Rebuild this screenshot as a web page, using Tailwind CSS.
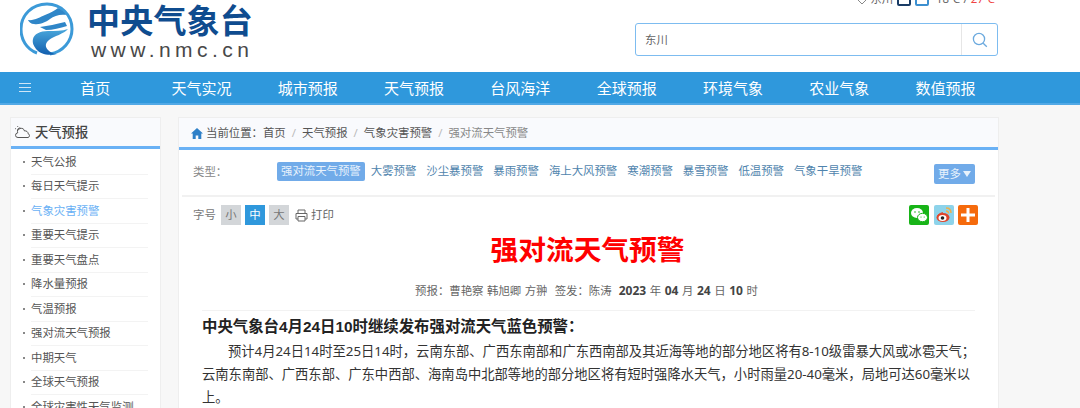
<!DOCTYPE html>
<html lang="zh">
<head>
<meta charset="UTF-8">
<title>强对流天气预警</title>
<script src="https://cdn.jsdelivr.net/npm/@tailwindcss/browser@4"></script>
</head>
<body class="bg-[#f7f7f7] font-['Noto_Sans','Noto_Sans_CJK_SC',sans-serif] text-[#555]">
<div class="w-[1080px] h-[408px] overflow-hidden">

  <!-- header -->
  <header class="h-[72px] bg-white flex justify-between overflow-hidden">
    <div class="flex pl-[20px] pt-[2px]">
      <svg width="54" height="54" viewBox="0 0 54 54">
        <defs>
          <linearGradient id="logoGrad" x1="0" y1="0" x2="0" y2="1">
            <stop offset="0" stop-color="#4aa8dc"/>
            <stop offset="1" stop-color="#125fae"/>
          </linearGradient>
        </defs>
        <path d="M17 51C6 47 1 37 1 27 1 13 12 2 27 2c14 0 25 11 25 25 0 12-9 23-22 25" fill="none" stroke="#3c9ad8" stroke-width="3"/>
        <path d="M8 18C14 19 20 15 25 13 31 11 35 8 38 6 42 8 45 10 46 13 40 12 34 14 30 17 26 20 20 23 14 22 11 22 9 20 8 18z" fill="#2f86c8"/>
        <path d="M20 25C28 24 36 22 45 20L47 24C40 26 33 28 26 28z" fill="#2f86c8"/>
        <path d="M13 37C14 32 20 29 28 29 35 29 42 29 48 27 44 32 34 34 29 38 25 41 25 45 28 48 30 50 33 52 37 52 28 54 20 52 16 47 14 44 12 41 13 37z" fill="url(#logoGrad)"/>
      </svg>
      <div class="ml-[13px] flex flex-col">
        <div class="text-[33px] leading-[38px] font-bold text-[#0f4c8f] tracking-[0.2px]">中央气象台</div>
        <div class="ml-[4px] text-[21px] leading-[20px] text-[#484848] tracking-[4.45px] font-['Liberation_Sans',sans-serif]">www.nmc.cn</div>
      </div>
    </div>
    <div class="w-[445px] pr-[82px] flex flex-col items-end">
      <div class="flex items-center h-[16px] -mt-[9px] text-[11.4px] text-[#666] pr-[3px]">
        <svg width="12" height="12" viewBox="0 0 12 12" class="mr-[2px]"><path d="M6 11 1 6a3 3 0 0 1 5-3 3 3 0 0 1 5 3z" fill="none" stroke="#888"/></svg>
        <span>东川</span>
        <span class="ml-[4px] w-[14px] h-[14px] border-2 border-[#1a3c66] rounded-[2px]"></span>
        <span class="ml-[4px] w-[14px] h-[14px] border-2 border-[#3c8fd0] rounded-[2px]"></span>
        <span class="ml-[7px]">18℃ / <span class="text-[#ef4444]">27℃</span></span>
      </div>
      <div class="mt-[16px] w-[363px] h-[33px] flex bg-white border-[1.5px] border-[#7dbcf0] rounded-[3px]">
        <div class="flex-1 pl-[9px] text-[11.4px] leading-[31px] text-[#666]">东川</div>
        <div class="w-[36px] border-l border-[#e6e6e6] flex items-center justify-center">
          <svg width="16" height="16" viewBox="0 0 16 16" fill="none" stroke="#6ba9de" stroke-width="1.3"><circle cx="7" cy="7" r="5.6"/><path d="m11.2 11.2 3.6 3.6"/></svg>
        </div>
      </div>
    </div>
  </header>

  <!-- nav -->
  <nav class="h-[33px] bg-[#2f98dc] border-b-2 border-[#52a9e6] flex items-center text-white text-[15px] pl-[18px]">
    <svg width="14" height="11" viewBox="0 0 14 11" stroke="#cfe6f7" stroke-width="1"><path d="M1 1.5h12M1 5.5h12M1 9.500h12"/></svg>
    <div class="ml-[10px] pt-[1px] grid grid-cols-[repeat(9,106.3px)] text-center leading-[31px]">
      <a>首页</a><a>天气实况</a><a>城市预报</a><a>天气预报</a><a>台风海洋</a><a>全球预报</a><a>环境气象</a><a>农业气象</a><a>数值预报</a>
    </div>
  </nav>

  <div class="flex pl-[10px] pt-[12px] gap-[17px] items-start">

    <!-- sidebar -->
    <aside class="w-[151px] shrink-0 bg-white border border-[#eeeeee] text-[11.4px]">
      <div class="h-[31px] bg-[#f9fafd] border-b-[3px] border-[#6ab1f5] flex items-center pl-[4px] pt-[2px] text-[13.300px] font-medium text-[#444]">
        <svg width="16" height="14" viewBox="0 0 16 14" fill="none" stroke="#555" class="mr-[4px]"><path d="M4 11.500H3a2.300 2.300 0 0 1-.3-4.600A3.500 3.500 0 0 1 9.500 5a2.800 2.800 0 0 1 3.600 2.700 2 2 0 0 1 0 3.800z"/><path d="M2.500 5a2.500 2.500 0 0 1 3-3M3 1 2.500.2M1 3 .2 2.500"/></svg>
        天气预报
      </div>
      <ul class="pl-[20px] pr-[12px] pt-[1px] text-[#555]">
        <li class="h-[24.500px] leading-[24px] border-b border-[#f3f3f3] flex items-center"><i class="w-[2px] h-[2px] bg-[#888] -ml-[8px] mr-[6px]"></i>天气公报</li>
        <li class="h-[24.500px] leading-[24px] border-b border-[#f3f3f3] flex items-center"><i class="w-[2px] h-[2px] bg-[#888] -ml-[8px] mr-[6px]"></i>每日天气提示</li>
        <li class="h-[24.500px] leading-[24px] border-b border-[#f3f3f3] flex items-center text-[#6ab1f5]"><i class="w-[2px] h-[2px] bg-[#888] -ml-[8px] mr-[6px]"></i>气象灾害预警</li>
        <li class="h-[24.500px] leading-[24px] border-b border-[#f3f3f3] flex items-center"><i class="w-[2px] h-[2px] bg-[#888] -ml-[8px] mr-[6px]"></i>重要天气提示</li>
        <li class="h-[24.500px] leading-[24px] border-b border-[#f3f3f3] flex items-center"><i class="w-[2px] h-[2px] bg-[#888] -ml-[8px] mr-[6px]"></i>重要天气盘点</li>
        <li class="h-[24.500px] leading-[24px] border-b border-[#f3f3f3] flex items-center"><i class="w-[2px] h-[2px] bg-[#888] -ml-[8px] mr-[6px]"></i>降水量预报</li>
        <li class="h-[24.500px] leading-[24px] border-b border-[#f3f3f3] flex items-center"><i class="w-[2px] h-[2px] bg-[#888] -ml-[8px] mr-[6px]"></i>气温预报</li>
        <li class="h-[24.500px] leading-[24px] border-b border-[#f3f3f3] flex items-center"><i class="w-[2px] h-[2px] bg-[#888] -ml-[8px] mr-[6px]"></i>强对流天气预报</li>
        <li class="h-[24.500px] leading-[24px] border-b border-[#f3f3f3] flex items-center"><i class="w-[2px] h-[2px] bg-[#888] -ml-[8px] mr-[6px]"></i>中期天气</li>
        <li class="h-[24.500px] leading-[24px] border-b border-[#f3f3f3] flex items-center"><i class="w-[2px] h-[2px] bg-[#888] -ml-[8px] mr-[6px]"></i>全球天气预报</li>
        <li class="h-[24.500px] leading-[24px] flex items-center"><i class="w-[2px] h-[2px] bg-[#888] -ml-[8px] mr-[6px]"></i>全球灾害性天气监测</li>
      </ul>
    </aside>

    <!-- main -->
    <main class="w-[821px] bg-white border border-[#eeeeee] text-[11.4px]">
      <div class="h-[32px] bg-[#f9fafd] border-b-[3px] border-[#6ab1f5] flex items-center pl-[12px] pt-[1px] text-[#555]">
        <svg width="12" height="11" viewBox="0 0 12 11" fill="#2f80c8" class="mr-[3px]"><path d="M6 0 0 5.500h1.700V11h3V7.500h2.600V11h3V5.500H12z"/></svg>
        <span>当前位置：</span><span>首页</span>
        <span class="mx-[6px] text-[#bbb]">/</span><span>天气预报</span>
        <span class="mx-[6px] text-[#bbb]">/</span><span>气象灾害预警</span>
        <span class="mx-[6px] text-[#bbb]">/</span><span class="text-[#888]">强对流天气预警</span>
      </div>

      <div class="mx-[3px] h-[47px] border-b-2 border-[#f1f1f1] flex items-center pl-[11px] pr-[20px] pb-[2px]">
        <span class="w-[84px] text-[#888]">类型：</span>
        <div class="flex-1 flex gap-[2px] text-[#4f84ad]">
          <span class="px-[4px] h-[19px] leading-[18px] rounded-[2px] bg-[#71abe9] text-[#e8f2fc]">强对流天气预警</span>
          <span class="px-[4px] leading-[18px]">大雾预警</span>
          <span class="px-[4px] leading-[18px]">沙尘暴预警</span>
          <span class="px-[4px] leading-[18px]">暴雨预警</span>
          <span class="px-[4px] leading-[18px]">海上大风预警</span>
          <span class="px-[4px] leading-[18px]">寒潮预警</span>
          <span class="px-[4px] leading-[18px]">暴雪预警</span>
          <span class="px-[4px] leading-[18px]">低温预警</span>
          <span class="px-[4px] leading-[18px]">气象干旱预警</span>
        </div>
        <span class="mt-[4px] w-[41px] h-[20px] rounded-[2px] bg-[#71abe9] text-[#e8f2fc] flex items-center justify-center gap-[2px]">更多<svg width="8" height="6" viewBox="0 0 8 6" fill="#e8f2fc"><path d="M0 0h8L4 6z"/></svg></span>
      </div>

      <div class="flex items-center pl-[14px] pr-[20px] mt-[8px] h-[20px]">
        <span class="text-[#777] w-[28px]">字号</span>
        <span class="w-[20px] h-[20px] bg-[#d3d6d9] text-[#777] text-center leading-[20px]">小</span>
        <span class="ml-[4px] w-[20px] h-[20px] bg-[#2f98dc] text-white text-center leading-[20px]">中</span>
        <span class="ml-[4px] w-[20px] h-[20px] bg-[#d3d6d9] text-[#777] text-center leading-[20px]">大</span>
        <svg width="13" height="13" viewBox="0 0 13 13" fill="none" stroke="#666" class="ml-[6px]"><path d="M3 4V1h7v3M3 10H1V4.500h11V10h-2M3 7.500h7V12H3z"/></svg>
        <span class="ml-[3px] text-[#666]">打印</span>
        <div class="ml-auto flex gap-[4.500px]">
          <svg width="20" height="20" viewBox="0 0 20 20"><rect width="20" height="20" rx="2" fill="#18b418"/><ellipse cx="8" cy="8" rx="6" ry="5" fill="#fff"/><ellipse cx="13.500" cy="12.500" rx="5" ry="4.200" fill="#fff" stroke="#18b418"/><circle cx="6" cy="7" r=".8" fill="#18b418"/><circle cx="10" cy="7" r=".8" fill="#18b418"/><circle cx="12" cy="12" r=".6" fill="#18b418"/><circle cx="15.200" cy="12" r=".6" fill="#18b418"/></svg>
          <svg width="20" height="20" viewBox="0 0 20 20"><rect width="20" height="20" rx="2" fill="#8dd3ea"/><path d="M12 3c3 0 5 2 5 5M12 6c1.500 0 2.500 1 2.500 2.500" fill="none" stroke="#eeb04a" stroke-width="1.500"/><ellipse cx="9" cy="12.500" rx="6.500" ry="4.500" fill="#e0452a"/><path d="M9 8c-3 1-5 2-5 4" stroke="#e0452a" stroke-width="2" fill="none"/><ellipse cx="8.500" cy="13" rx="4" ry="3" fill="#fff"/><circle cx="8.500" cy="13" r="1.800" fill="#222"/></svg>
          <svg width="20" height="20" viewBox="0 0 20 20"><rect width="20" height="20" rx="2" fill="#f56a0c"/><path d="M8.500 3h3v5.500H17v3h-5.500V17h-3v-5.500H3v-3h5.500z" fill="#fff"/></svg>
        </div>
      </div>

      <h1 class="mt-[6px] h-[36px] leading-[36px] text-center text-[27.700px] font-bold text-[#ff0000] -ml-[2px]">强对流天气预警</h1>

      <div class="mx-[23px] h-[32px] mt-[12px] border-b border-[#f2f2f2] text-center text-[#666] leading-[24px] pr-[4px] [word-spacing:0.6px]">
        预报：曹艳察 韩旭卿 方翀&nbsp;&nbsp;签发：陈涛&nbsp;&nbsp;<b class="text-[#444] text-[12px]">2023</b> 年 <b class="text-[#444] text-[12px]">04</b> 月 <b class="text-[#444] text-[12px]">24</b> 日 <b class="text-[#444] text-[12px]">10</b> 时
      </div>

      <div class="ml-[23px] mr-[21px] mt-[6px] text-[#333]">
        <div class="text-[15.400px] leading-[20px] font-bold text-[#222] font-['Liberation_Sans','Noto_Sans_CJK_SC',sans-serif]">中央气象台4月24日10时继续发布强对流天气蓝色预警：</div>
        <p class="mt-[3px] text-[13.300px] leading-[23px] indent-[26px]">预计4月24日14时至25日14时，云南东部、广西东南部和广东西南部及其近海等地的部分地区将有8-10级雷暴大风或冰雹天气；云南东南部、广西东部、广东中西部、海南岛中北部等地的部分地区将有短时强降水天气，小时雨量20-40毫米，局地可达60毫米以上。</p>
      </div>
    </main>
  </div>
</div>
</body>
</html>
